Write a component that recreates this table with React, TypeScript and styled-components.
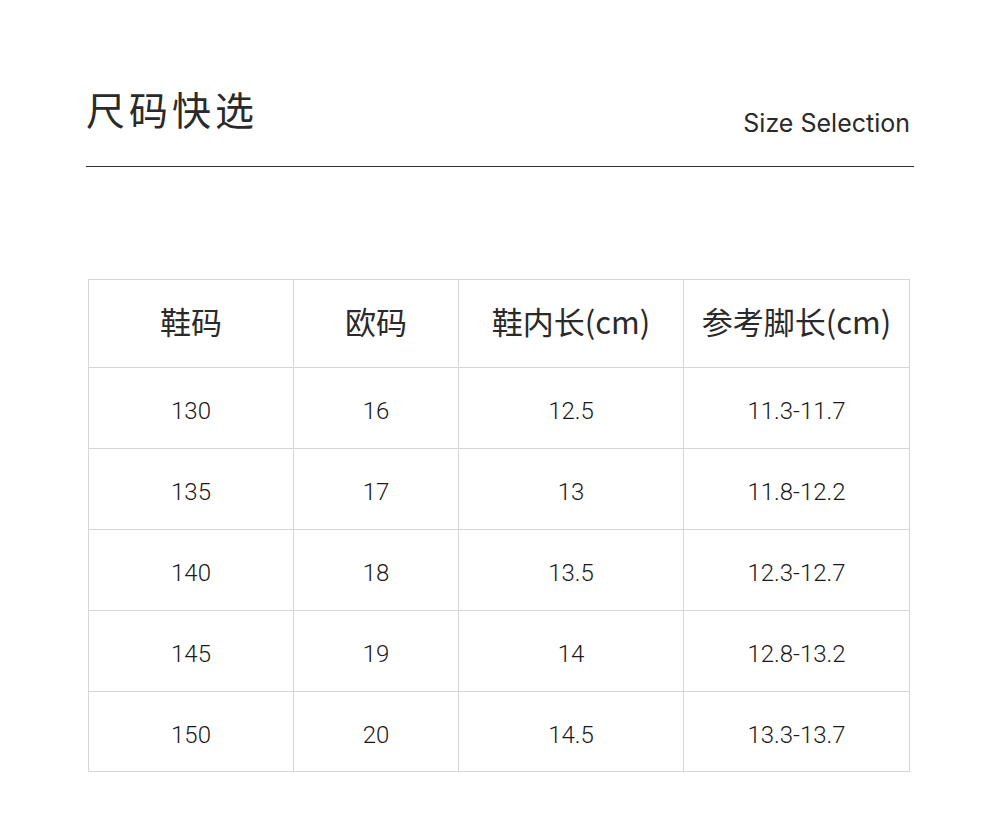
import React from "react";
import styled, { createGlobalStyle } from "styled-components";

const Global = createGlobalStyle`
  html, body { margin: 0; padding: 0; background: #fff; }
  body { font-family: Roboto, "Noto Sans CJK SC", sans-serif; color: #2b2b2b; }
`;

const Page = styled.div`
  width: 1000px;
  height: 815px;
  box-sizing: border-box;
  padding: 82px 86px 0 86px;
  background: #fff;
`;

const Header = styled.header`
  display: flex;
  justify-content: space-between;
  align-items: flex-end;
  padding-bottom: 32px;
  border-bottom: 1px solid #333;
`;

const Title = styled.h1`
  margin: 0;
  font-family: "Noto Sans CJK SC", sans-serif;
  font-weight: 400;
  font-size: 39px;
  line-height: 52px;
  letter-spacing: 4px;
  color: #2a2a2a;
`;

const Subtitle = styled.div`
  font-family: Inter, "Noto Sans", sans-serif;
  font-size: 25px;
  line-height: 30px;
  color: #2a2a2a;
  margin-right: 4px;
  margin-bottom: -4px;
`;

const Table = styled.table`
  margin: 112px 0 0 2px;
  border-collapse: collapse;
  table-layout: fixed;
`;

const Th = styled.th<{ $w: number }>`
  width: ${(p) => p.$w}px;
  height: 88px;
  box-sizing: border-box;
  border: 1px solid #d6d6d6;
  font-family: "Noto Sans CJK SC", sans-serif;
  font-weight: 400;
  font-size: 31px;
  line-height: 40px;
  color: #2a2a2a;
  text-align: center;
  padding: 0 0 6px 0;
`;

const Td = styled.td<{ $last?: boolean }>`
  height: ${(p) => (p.$last ? 80 : 81)}px;
  box-sizing: border-box;
  border: 1px solid #d6d6d6;
  font-family: Roboto, sans-serif;
  font-weight: 300;
  font-size: 24px;
  color: #1a1a1a;
  text-align: center;
  padding: 6px 0 0 0;
`;

const cols = [
  { label: "鞋码", w: 205 },
  { label: "欧码", w: 165 },
  { label: "鞋内长(cm)", w: 225 },
  { label: "参考脚长(cm)", w: 226 },
];

const rows = [
  ["130", "16", "12.5", "11.3-11.7"],
  ["135", "17", "13", "11.8-12.2"],
  ["140", "18", "13.5", "12.3-12.7"],
  ["145", "19", "14", "12.8-13.2"],
  ["150", "20", "14.5", "13.3-13.7"],
];

export default function App() {
  return (
    <>
      <Global />
      <Page>
        <Header>
          <Title>尺码快选</Title>
          <Subtitle>Size Selection</Subtitle>
        </Header>
        <Table>
          <thead>
            <tr>
              {cols.map((c) => (
                <Th key={c.label} $w={c.w}>
                  {c.label}
                </Th>
              ))}
            </tr>
          </thead>
          <tbody>
            {rows.map((r, ri) => (
              <tr key={r[0]}>
                {r.map((v, i) => (
                  <Td key={i} $last={ri === rows.length - 1}>
                    {v}
                  </Td>
                ))}
              </tr>
            ))}
          </tbody>
        </Table>
      </Page>
    </>
  );
}
